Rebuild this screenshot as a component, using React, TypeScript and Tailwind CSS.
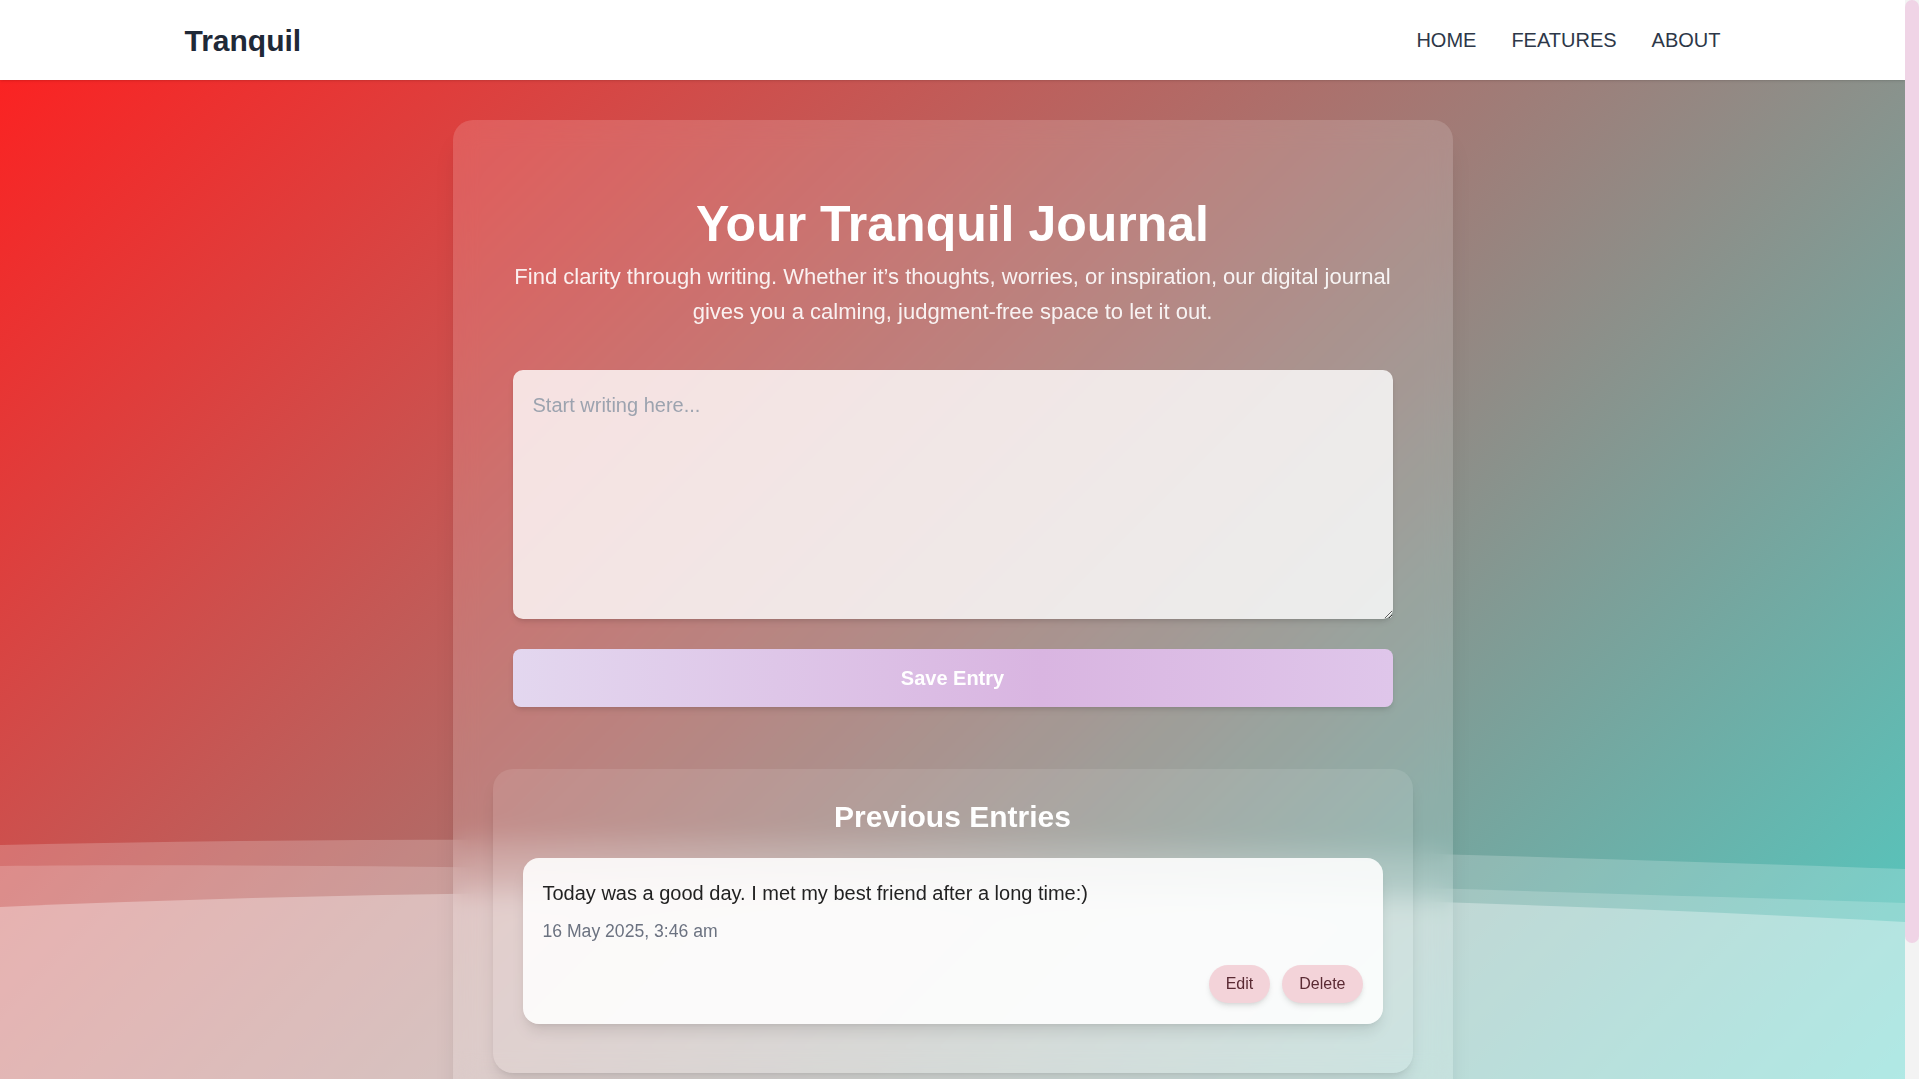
import { useState } from 'react'

interface Entry { id: number; text: string; date: string }

function Waves() {
  return (
    <svg
      className="pointer-events-none fixed bottom-0 left-0 z-0 h-[240px] w-[calc(100%-14px)]"
      viewBox="0 0 1905 240"
      preserveAspectRatio="none"
    >
      <path d="M0,6 C600,-8 1300,8 1905,30 L1905,240 L0,240 Z" fill="#fff" fillOpacity="0.2" />
      <path d="M0,27 C500,22 1300,44 1905,64 L1905,240 L0,240 Z" fill="#fff" fillOpacity="0.18" />
      <path d="M0,68 C600,42 1300,50 1905,83 L1905,240 L0,240 Z" fill="#fff" fillOpacity="0.32" />
    </svg>
  )
}

export default function App() {
  const [draft, setDraft] = useState('')
  const [entries] = useState<Entry[]>([
    { id: 1, text: 'Today was a good day. I met my best friend after a long time:)', date: '16 May 2025, 3:46 am' },
  ])

  return (
    <div className="flex h-screen font-['Liberation_Sans',Arial,sans-serif]">
      <div className="flex-1 overflow-y-auto bg-[linear-gradient(135deg,#ff1e1e,#4ecdc4)] [scrollbar-width:none]">
        <Waves />

        <header className="relative z-10 bg-white shadow-sm">
          <nav className="mx-auto flex h-20 max-w-[1536px] items-center justify-between">
            <span className="text-[30px] font-bold text-[#1f2937]">Tranquil</span>
            <div className="flex gap-[35px] text-[20px] text-[#2d3748]">
              <a href="#">HOME</a>
              <a href="#">FEATURES</a>
              <a href="#">ABOUT</a>
            </div>
          </nav>
        </header>

        <main className="relative z-10 pt-10 pb-[121px]">
          <div className="mx-auto max-w-[1000px] rounded-[20px] bg-white/15 p-10 shadow-xl backdrop-blur-md">
            <section className="px-5">
              <h1 className="mt-[34px] text-center text-[50px] font-bold leading-[60px] text-white">Your Tranquil Journal</h1>
              <p className="mt-[5px] text-center text-[22px] leading-[1.6] text-white/90">
                Find clarity through writing. Whether it’s thoughts, worries, or inspiration, our digital journal gives you a calming, judgment-free space to let it out.
              </p>

              <textarea
                value={draft}
                onChange={e => setDraft(e.target.value)}
                placeholder="Start writing here..."
                className="mt-[41px] block h-[249px] w-full resize-y rounded-[10px] bg-white/80 p-5 text-[20px] leading-[1.5] text-gray-800 shadow-md outline-none placeholder:text-[#9ca3af]"
              />

              <button className="mt-[30px] h-[58px] w-full rounded-lg bg-[linear-gradient(90deg,#e3d7ef,#d9b5e1_60%,#dfc6ea)] text-[20px] font-bold text-white shadow-md">
                Save Entry
              </button>
            </section>

            <section className="mt-[62px] rounded-[20px] bg-white/10 px-[30px] pt-[30px] pb-[49px] shadow-lg">
              <h2 className="mb-[23px] text-center text-[30px] font-bold leading-9 text-white">Previous Entries</h2>
              <div className="grid gap-4">
                {entries.map(entry => (
                  <div key={entry.id} className="rounded-2xl bg-white/[0.88] p-5 pb-[21px] shadow-lg">
                    <p className="text-[20px] leading-[30px] text-[#222]">{entry.text}</p>
                    <p className="mt-[10px] text-[17.6px] leading-[26px] text-[#6b7280]">{entry.date}</p>
                    <div className="mt-[21px] flex justify-end gap-3">
                      <button className="h-[38px] rounded-full bg-[#f3d3d9] px-[17px] text-[16px] text-[#5a2a33] shadow-md">Edit</button>
                      <button className="h-[38px] rounded-full bg-[#f3d3d9] px-[17px] text-[16px] text-[#5a2a33] shadow-md">Delete</button>
                    </div>
                  </div>
                ))}
              </div>
            </section>
          </div>
        </main>
      </div>

      {/* scrollbar as painted in the reference */}
      <div className="w-[14px] shrink-0 bg-[#f3f3f3]">
        <div className="h-[943px] rounded-full bg-[#f0d4e6]" />
      </div>
    </div>
  )
}
